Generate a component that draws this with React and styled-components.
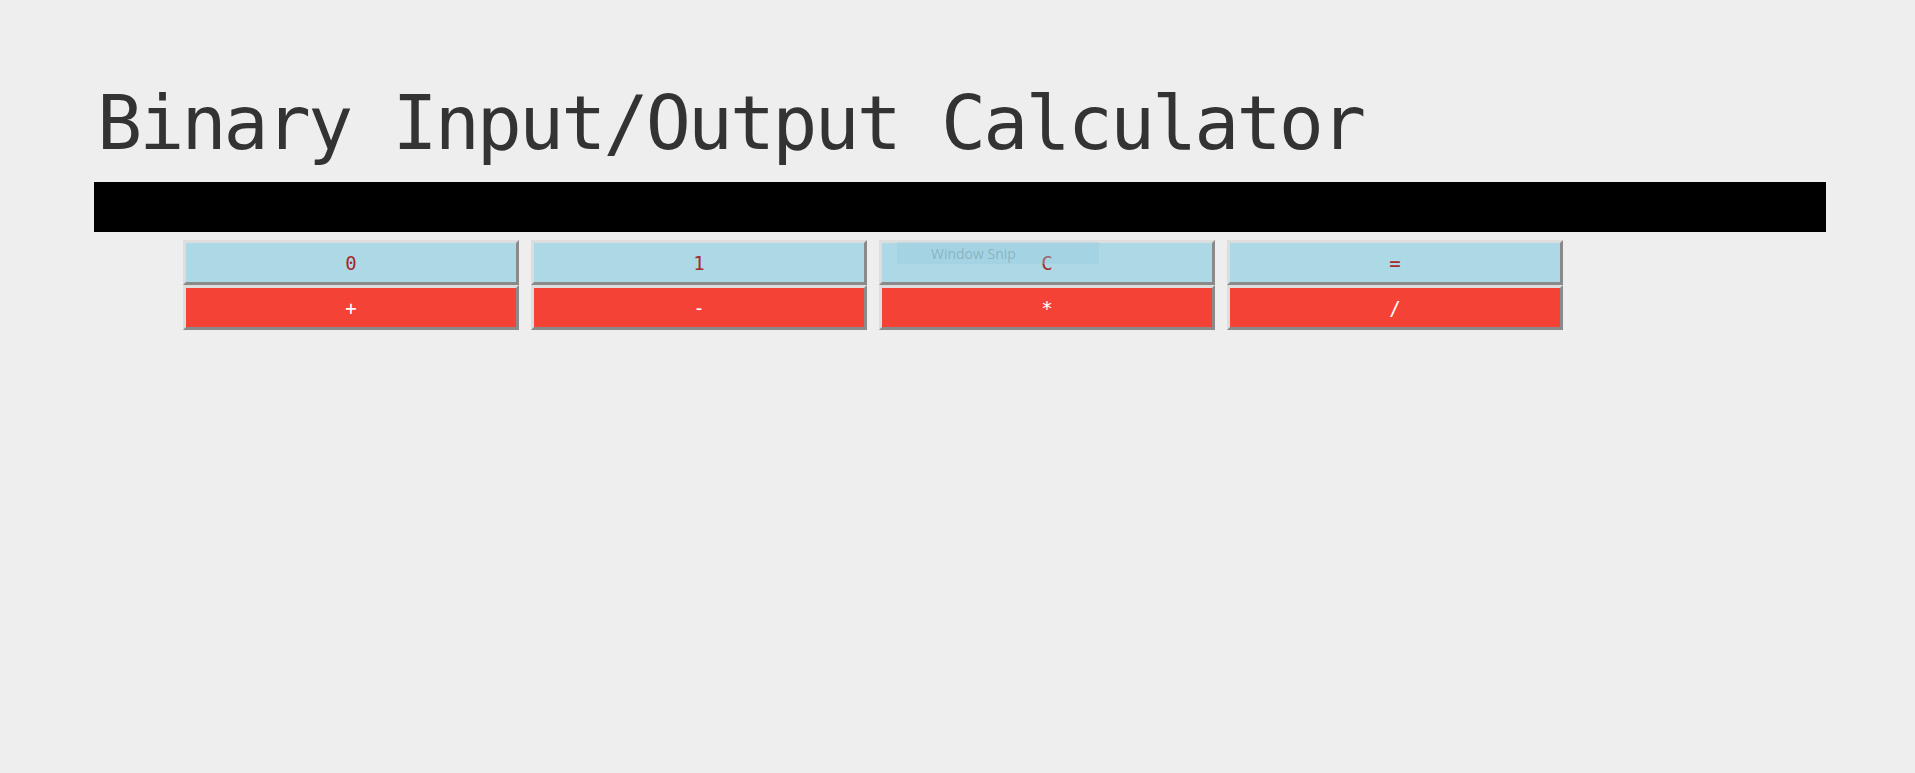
import React from 'react';
import styled, { createGlobalStyle } from 'styled-components';

const GlobalStyle = createGlobalStyle`
    html, body {
        margin:0;
        padding:0;
        background-color:#eeeeee;
    }
    body {
        font-family:"DejaVu Sans Mono", "Liberation Mono", monospace;
    }
`;

const Page = styled.div`
    padding:86px 0 0 94px;
    min-height:773px;
    box-sizing:border-box;
`;

const Title = styled.h1`
    margin:0 0 21px 0;
    font-size:75px;
    line-height:1;
    font-weight:normal;
    letter-spacing:-2.95px;
    color:#333333;
    padding-left:3px;
`;

const Display = styled.div`
    width:1732px;
    height:50px;
    background-color:#000000;
    color:#ffffff;
`;

const Keypad = styled.div`
    display:grid;
    grid-template-columns:repeat(4, 336px);
    column-gap:12px;
    margin:8px 0 0 89px;
`;

const Key = styled.button`
    position:relative;
    height:45px;
    padding:0;
    border:3px solid;
    border-color:#dddddd #8a8a8a #8a8a8a #dddddd;
    background-color:${props => props.$op ? '#f44336' : '#add8e6'};
    color:${props => props.$op ? '#ffffff' : '#a52a2a'};
    font-family:"DejaVu Sans Mono", monospace;
    font-size:19px;
    cursor:pointer;
`;

const SnipTip = styled.span`
    position:absolute;
    left:15px;
    top:-1px;
    width:202px;
    height:22px;
    display:flex;
    align-items:center;
    padding-left:34px;
    box-sizing:border-box;
    background-color:rgba(150,205,222,0.35);
    color:rgba(120,150,165,0.55);
    font-family:"Open Sans", "Noto Sans", sans-serif;
    font-size:14px;
    pointer-events:none;
`;

const keys = [
    {label:'0'}, {label:'1'}, {label:'C', tip:true}, {label:'='},
    {label:'+', op:true}, {label:'-', op:true}, {label:'*', op:true}, {label:'/', op:true},
];

export default function App() {
    return (
        <Page>
            <GlobalStyle />
            <Title>Binary Input/Output Calculator</Title>
            <Display />
            <Keypad>
                {keys.map(k => (
                    <Key key={k.label} type="button" $op={k.op}>
                        {k.tip && <SnipTip>Window Snip</SnipTip>}
                        {k.label}
                    </Key>
                ))}
            </Keypad>
        </Page>
    );
}
